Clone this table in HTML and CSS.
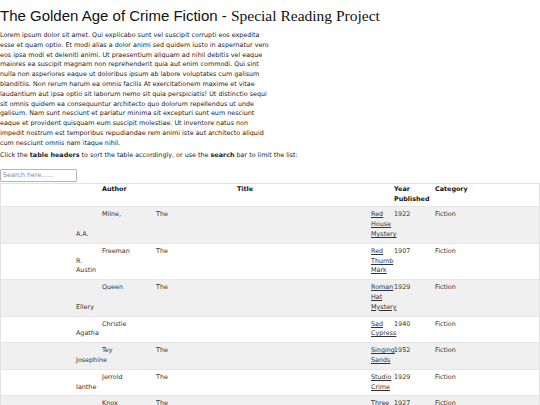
FILE: index.html
```html
<!DOCTYPE html>
<html lang="en">
<head>
<meta charset="utf-8">
<title>The Golden Age of Crime Fiction</title>
<link rel="stylesheet" href="styles.css">
</head>
<body>
<h1 class="title">The Golden Age of Crime Fiction - <span class="title-serif">Special Reading Project</span></h1>
<p class="intro">Lorem ipsum dolor sit amet. Qui explicabo sunt vel suscipit corrupti eos expedita esse et quam optio. Et modi alias a dolor animi sed quidem iusto in aspernatur vero eos ipsa modi et deleniti animi. Ut praesentium aliquam ad nihil debitis vel eaque maiores ea suscipit magnam non reprehenderit quia aut enim commodi. Qui sint nulla non asperiores eaque ut doloribus ipsum ab labore voluptates cum galisum blanditiis. Non rerum harum ea omnis facilis At exercitationem maxime et vitae laudantium aut ipsa optio sit laborum nemo sit quia perspiciatis! Ut distinctio sequi sit omnis quidem ea consequuntur architecto quo dolorum repellendus ut unde galisum. Nam sunt nesciunt et pariatur minima sit excepturi sunt eum nesciunt eaque et provident quisquam eum suscipit molestiae. Ut inventore natus non impedit nostrum est temporibus repudiandae rem animi iste aut architecto aliquid cum nesciunt omnis nam itaque nihil.</p>
<p class="hint">Click the <b>table headers</b> to sort the table accordingly, or use the <b>search</b> bar to limit the list:</p>
<input class="search" type="text" placeholder="Search here......">
<table class="books">
<colgroup>
<col class="c-first"><col class="c-last"><col class="c-the"><col class="c-link"><col class="c-year"><col class="c-cat">
</colgroup>
<thead>
<tr><th class="h-first"></th><th class="h-author">Author</th><th class="h-title" colspan="2">Title</th><th class="h-year">Year Published</th><th class="h-cat">Category</th></tr>
</thead>
<tbody>
<tr><td class="first">A.A.</td><td class="last">Milne,</td><td class="the">The</td><td class="link"><a href="#">Red House Mystery</a></td><td class="year">1922</td><td class="cat">Fiction</td></tr>
<tr><td class="first">R. Austin</td><td class="last">Freeman</td><td class="the">The</td><td class="link"><a href="#">Red Thumb Mark</a></td><td class="year">1907</td><td class="cat">Fiction</td></tr>
<tr><td class="first">Ellery</td><td class="last">Queen</td><td class="the">The</td><td class="link"><a href="#">Roman Hat Mystery</a></td><td class="year">1929</td><td class="cat">Fiction</td></tr>
<tr><td class="first">Agatha</td><td class="last">Christie</td><td class="the"></td><td class="link"><a href="#">Sad Cypress</a></td><td class="year">1940</td><td class="cat">Fiction</td></tr>
<tr><td class="first">Josephine</td><td class="last">Tey</td><td class="the">The</td><td class="link"><a href="#">Singing Sands</a></td><td class="year">1952</td><td class="cat">Fiction</td></tr>
<tr><td class="first">Ianthe</td><td class="last">Jerrold</td><td class="the">The</td><td class="link"><a href="#">Studio Crime</a></td><td class="year">1929</td><td class="cat">Fiction</td></tr>
<tr><td class="first">Ronald</td><td class="last">Knox</td><td class="the">The</td><td class="link"><a href="#">Three Taps</a></td><td class="year">1927</td><td class="cat">Fiction</td></tr>
</tbody>
</table>
</body>
</html>
```

FILE: styles.css
```css
html, body {
  margin: 0;
  padding: 0;
  background: #ffffff;
}

body {
  font-family: "DejaVu Sans", Verdana, sans-serif;
  font-size: 6.4px;
  line-height: 9.8px;
  color: #222222;
}

.title {
  margin: 7px 0 7px;
  font-family: "Liberation Sans", Arial, sans-serif;
  font-size: 15px;
  font-weight: normal;
  line-height: 17px;
  color: #111111;
}

.title-serif {
  font-family: "Liberation Serif", "Times New Roman", serif;
  font-size: 15.5px;
}

.intro {
  width: 270px;
  margin: 0 0 2.5px;
}

.hint {
  margin: 0 0 8px;
}

.search {
  display: block;
  box-sizing: border-box;
  width: 77px;
  height: 13px;
  margin: 0 0 1px;
  padding: 0 2px;
  border: 1px solid #b5b5b5;
  border-radius: 1px;
  font-family: "DejaVu Sans", Verdana, sans-serif;
  font-size: 6.4px;
  color: #222222;
  background: #ffffff;
}

.search::placeholder {
  color: #8a8a8a;
}

.books {
  width: 540px;
  table-layout: fixed;
  border-collapse: separate;
  border-spacing: 0;
  border: 1px solid #e2e2e2;
  box-sizing: border-box;
}

.c-first { width: 97px; }
.c-last { width: 54px; }
.c-the { width: 215px; }
.c-link { width: 23px; }
.c-year { width: 41px; }
.c-cat { width: 108px; }

.books th {
  text-align: left;
  vertical-align: top;
  font-weight: bold;
  color: #111111;
  padding: 1.5px 4px;
  border-bottom: 1px solid #e6e6e6;
}

.books th.h-title {
  padding-left: 85px;
}

.books td {
  vertical-align: top;
  padding: 3px 4px;
  color: #333333;
  border-bottom: 1px solid #e6e6e6;
}

.books tbody tr:nth-child(odd) td {
  background: #f0f0f0;
}

.books td.first {
  vertical-align: bottom;
  padding-left: 75px;
  padding-right: 0;
}

.books td.link {
  padding-right: 0;
}

.books td.link a {
  color: #333333;
  text-decoration: underline;
}
```
